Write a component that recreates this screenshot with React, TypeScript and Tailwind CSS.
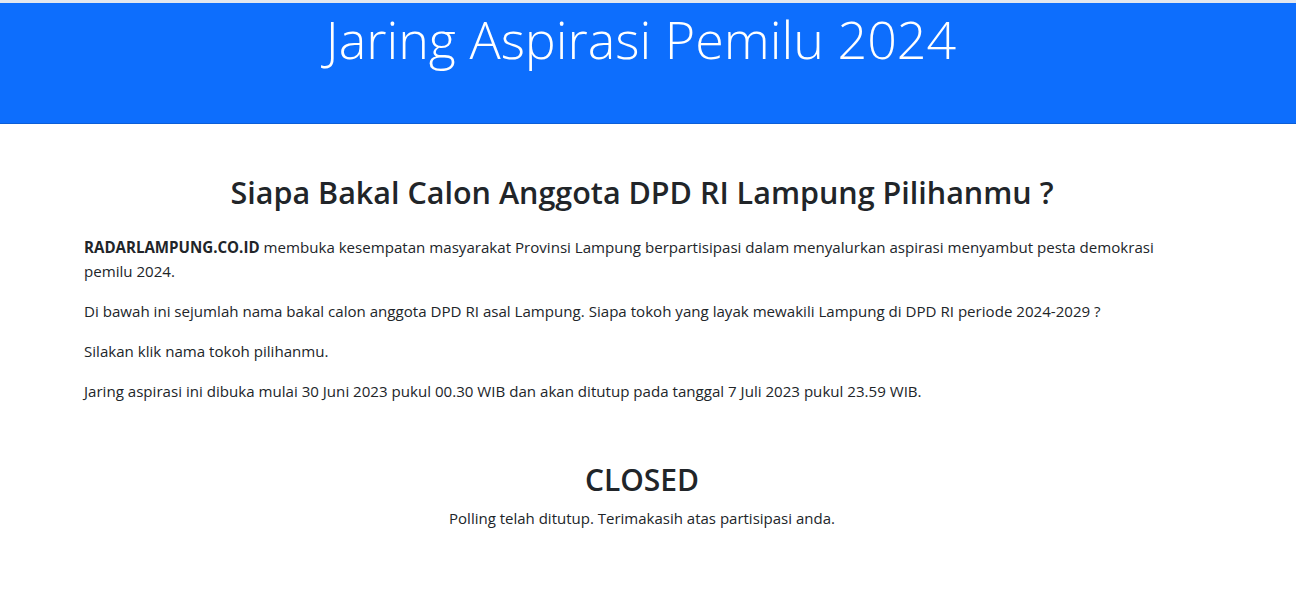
export default function App() {
  return (
    <div className="min-h-[608px] bg-white text-[#212529] font-['Open_Sans','Noto_Sans',sans-serif]">
      <div className="h-[3px] bg-[#e3e8ef]" />
      <header className="h-[121px] bg-[#0d6efd] border-b border-[#0b5ed7] pr-[14px] text-center text-white">
        <h1 className="pt-[5px] text-[52px] font-light leading-[1.2]">Jaring Aspirasi Pemilu 2024</h1>
      </header>

      <main className="ml-[84px] mr-[96px]">
        <h2 className="mt-[50px] mb-[24px] text-center text-[30.5px] font-semibold leading-[1.2]">
          Siapa Bakal Calon Anggota DPD RI Lampung Pilihanmu ?
        </h2>
        <div className="text-[15.1px] leading-[24px]">
          <p className="mb-4">
            <b className="font-bold">RADARLAMPUNG.CO.ID</b>{' '}
            membuka kesempatan masyarakat Provinsi Lampung berpartisipasi dalam menyalurkan aspirasi menyambut pesta
            demokrasi pemilu 2024.
          </p>
          <p className="mb-4">
            Di bawah ini sejumlah nama bakal calon anggota DPD RI asal Lampung. Siapa tokoh yang layak mewakili Lampung di
            DPD RI periode 2024-2029 ?
          </p>
          <p className="mb-4">Silakan klik nama tokoh pilihanmu.</p>
          <p className="mb-4">
            Jaring aspirasi ini dibuka mulai 30 Juni 2023 pukul 00.30 WIB dan akan ditutup pada tanggal 7 Juli 2023 pukul
            23.59 WIB.
          </p>
        </div>

        <div className="mt-[58px] text-center">
          <h3 className="text-[30px] font-semibold leading-[38px]">CLOSED</h3>
          <p className="mt-[7px] text-[15px] leading-[24px]">Polling telah ditutup. Terimakasih atas partisipasi anda.</p>
        </div>
      </main>
    </div>
  )
}
